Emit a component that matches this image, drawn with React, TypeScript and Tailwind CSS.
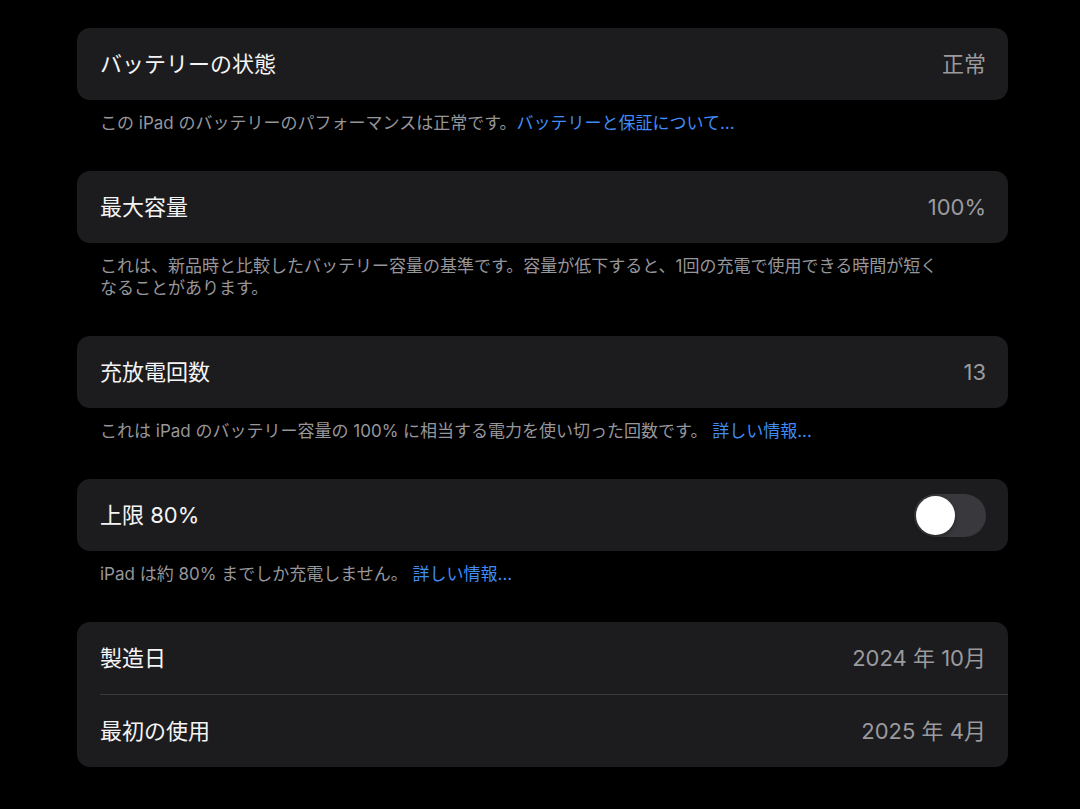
import React from 'react';

const font = "font-['Inter','Noto_Sans_CJK_JP',sans-serif]";

const Card: React.FC<{ children: React.ReactNode }> = ({ children }) => (
  <div className="bg-[#1c1c1e] rounded-[13px] overflow-hidden">{children}</div>
);

const Row: React.FC<{ label: string; value?: string; right?: React.ReactNode }> = ({ label, value, right }) => (
  <div className="h-[72px] pl-[23px] pr-[22px] flex items-center justify-between">
    <span className="text-[22px] text-[#f4f4f5]">{label}</span>
    {right ?? <span className="text-[22px] text-[#9a9a9f]">{value}</span>}
  </div>
);

const Footer: React.FC<{ children: React.ReactNode }> = ({ children }) => (
  <p className="pl-[23px] pt-[12px] pb-[37px] max-w-[872px] text-[17px] leading-[22px] text-[#96969b]">
    {children}
  </p>
);

const Link: React.FC<{ children: React.ReactNode }> = ({ children }) => (
  <span className="text-[#3f8cf6]">{children}</span>
);

const Toggle: React.FC = () => (
  <div className="w-[72px] h-[43px] rounded-full bg-[#39393d] p-[2px] flex items-center">
    <div className="w-[39px] h-[39px] rounded-full bg-white shadow-[0_2px_4px_rgba(0,0,0,0.35)]" />
  </div>
);

export default function App() {
  return (
    <div className={`min-h-[809px] bg-black pt-[28px] pl-[77px] w-[1080px] ${font}`}>
      <div className="w-[931px]">
        <Card>
          <Row label="バッテリーの状態" value="正常" />
        </Card>
        <Footer>
          この iPad のバッテリーのパフォーマンスは正常です。<Link>バッテリーと保証について...</Link>
        </Footer>

        <Card>
          <Row label="最大容量" value="100%" />
        </Card>
        <Footer>
          これは、新品時と比較したバッテリー容量の基準です。容量が低下すると、1回の充電で使用できる時間が短くなることがあります。
        </Footer>

        <Card>
          <Row label="充放電回数" value="13" />
        </Card>
        <Footer>
          これは iPad のバッテリー容量の 100% に相当する電力を使い切った回数です。 <Link>詳しい情報...</Link>
        </Footer>

        <Card>
          <Row label="上限 80%" right={<Toggle />} />
        </Card>
        <Footer>
          iPad は約 80% までしか充電しません。 <Link>詳しい情報...</Link>
        </Footer>

        <Card>
          <Row label="製造日" value="2024 年 10月" />
          <div className="ml-[23px] h-px bg-[#38383a]" />
          <Row label="最初の使用" value="2025 年 4月" />
        </Card>
      </div>
    </div>
  );
}
